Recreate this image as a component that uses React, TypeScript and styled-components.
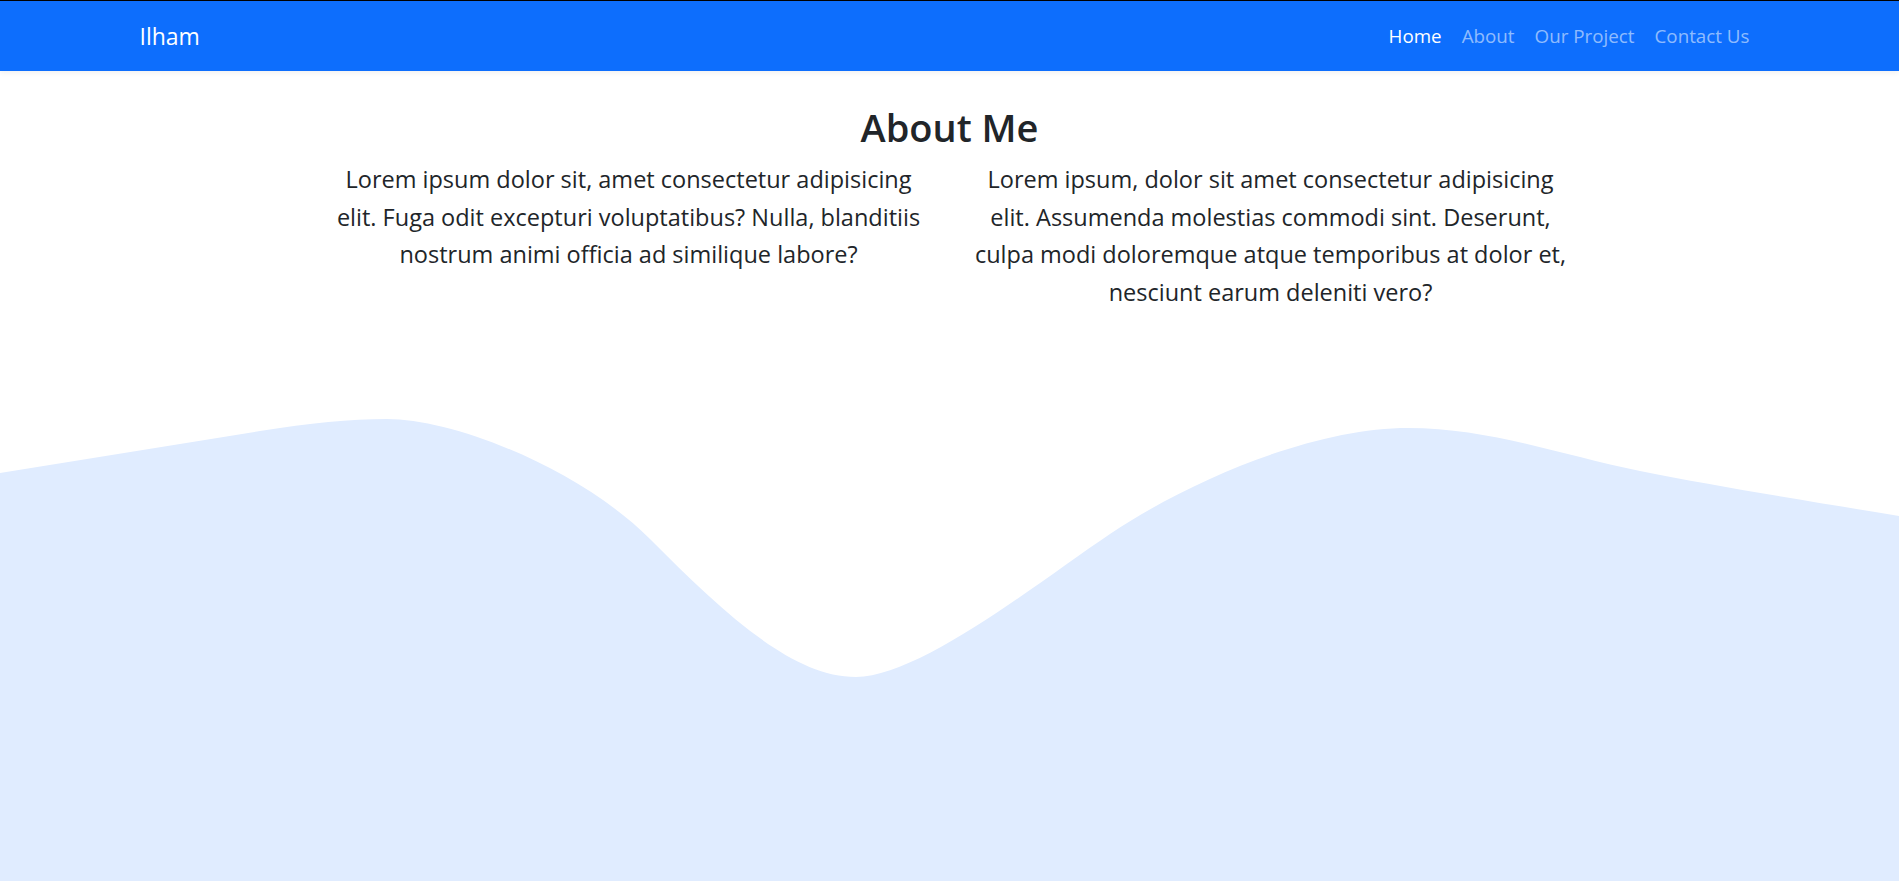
import React from "react";
import styled, { createGlobalStyle } from "styled-components";

const GlobalStyle = createGlobalStyle`
  *, *::before, *::after { box-sizing: border-box; }
  body {
    margin: 0;
    font-family: "Open Sans", "Noto Sans", sans-serif;
    color: #212529;
    background: #ffffff;
  }
`;

const NavBar = styled.nav`
  height: 71px;
  background: #0d6efd;
  border-top: 1px solid #000;
  box-shadow: 0 2px 5px rgba(0, 0, 0, 0.06);
  position: relative;
  z-index: 2;
`;

const NavInner = styled.div`
  max-width: 1650px;
  height: 100%;
  margin: 0 auto;
  padding: 0 15px;
  display: flex;
  align-items: center;
  justify-content: space-between;
`;

const Brand = styled.a`
  color: #fff;
  font-size: 23px;
  text-decoration: none;
  line-height: 1.5;
`;

const NavList = styled.ul`
  list-style: none;
  margin: 0;
  padding: 0;
  display: flex;
`;

const NavLink = styled.a<{ $active?: boolean }>`
  display: block;
  padding: 0 10px;
  font-size: 18.8px;
  line-height: 1.5;
  text-decoration: none;
  color: ${(p) => (p.$active ? "#ffffff" : "rgba(255, 255, 255, 0.55)")};
`;

const About = styled.section`
  padding-top: 32px;
  text-align: center;
`;

const Title = styled.h2`
  margin: 0 0 10px;
  font-size: 38px;
  font-weight: 600;
  line-height: 48px;
  color: #212529;
`;

const Columns = styled.div`
  display: grid;
  grid-template-columns: repeat(2, 603px);
  column-gap: 39px;
  justify-content: center;
`;

const Para = styled.p`
  margin: 0;
  font-size: 23.5px;
  line-height: 37.5px;
  color: #212529;
`;

const Wave = styled.svg`
  display: block;
  width: 100%;
  height: 462px;
  margin-top: 108px;
`;

const NextSection = styled.section`
  background: #e0ecff;
  height: 200px;
`;

const links = ["Home", "About", "Our Project", "Contact Us"];

export default function App() {
  return (
    <>
      <GlobalStyle />
      <NavBar>
        <NavInner>
          <Brand href="#">Ilham</Brand>
          <NavList>
            {links.map((l, i) => (
              <li key={l}>
                <NavLink href="#" $active={i === 0}>
                  {l}
                </NavLink>
              </li>
            ))}
          </NavList>
        </NavInner>
      </NavBar>
      <About>
        <Title>About Me</Title>
        <Columns>
          <Para>
            Lorem ipsum dolor sit, amet consectetur adipisicing elit. Fuga odit
            excepturi voluptatibus? Nulla, blanditiis nostrum animi officia ad
            similique labore?
          </Para>
          <Para>
            Lorem ipsum, dolor sit amet consectetur adipisicing elit. Assumenda
            molestias commodi sint. Deserunt, culpa modi doloremque atque
            temporibus at dolor et, nesciunt earum deleniti vero?
          </Para>
        </Columns>
        <Wave viewBox="0 0 1899 462" preserveAspectRatio="none">
          <path
            fill="#e0ecff"
            d="M0,54 L260,12 C310,4 350,0 387,0 C455,0 580,50 650,120 C720,190 790,258 856,258 C920,258 1040,162 1110,115 C1200,55 1320,9 1408,9 C1490,9 1560,36 1640,52 C1720,68 1820,84 1899,97 L1899,462 L0,462 Z"
          />
        </Wave>
      </About>
      <NextSection />
    </>
  );
}
